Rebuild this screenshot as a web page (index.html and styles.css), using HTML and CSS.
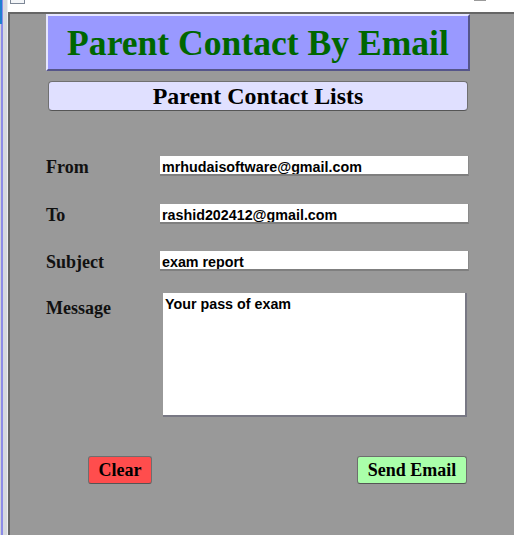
FILE: index.html
```html
<!DOCTYPE html>
<html>
<head>
<meta charset="utf-8">
<title>Parent Contact By Email</title>
<link rel="stylesheet" href="styles.css">
</head>
<body>
<div class="screen">
  <div class="side"></div>
  <div class="window">
    <div class="titlebar">
      <span class="app-icon"></span>
      <span class="controls">
        <span class="min"></span>
        <svg class="close" width="16" height="5" viewBox="0 0 16 5"><path d="M2 -3 L6 3 M14 -3 L10 3" stroke="#9a9a9a" stroke-width="1.2" fill="none"/></svg>
      </span>
    </div>
    <div class="body-row">
      <div class="panel">
        <div class="title-box">Parent Contact By Email</div>
        <div class="sub-box">Parent Contact Lists</div>
        <form class="form">
          <div class="row row-from">
            <label class="lbl" for="from">From</label>
            <input class="field" id="from" type="text" value="mrhudaisoftware@gmail.com">
          </div>
          <div class="row row-to">
            <label class="lbl" for="to">To</label>
            <input class="field" id="to" type="text" value="rashid202412@gmail.com">
          </div>
          <div class="row row-subject">
            <label class="lbl" for="subject">Subject</label>
            <input class="field" id="subject" type="text" value="exam report">
          </div>
          <div class="row row-message">
            <label class="lbl lbl-msg" for="message">Message</label>
            <textarea class="area" id="message">Your pass of exam</textarea>
          </div>
          <div class="actions">
            <button type="button" class="btn btn-clear">Clear</button>
            <button type="button" class="btn btn-send">Send Email</button>
          </div>
        </form>
      </div>
      <div class="right-edge"></div>
    </div>
  </div>
</div>
</body>
</html>
```

FILE: styles.css
```css
html, body {
  margin: 0;
  padding: 0;
  background: #ffffff;
}

.screen {
  display: flex;
  width: 514px;
  height: 535px;
  overflow: hidden;
}

.side {
  width: 8px;
  flex: none;
  background:
    linear-gradient(to bottom, #1f7fd0 0 24px, transparent 24px) 0 0 / 2px 100% no-repeat,
    linear-gradient(to right, #d0d3d8 0 1px, #8c8ce8 1px 3px, #d6d9de 3px 7px, #eceef1 7px 8px);
}

.window {
  flex: 1;
  display: flex;
  flex-direction: column;
}

.titlebar {
  height: 12px;
  flex: none;
  background: #ffffff;
  display: flex;
  align-items: flex-start;
  justify-content: space-between;
}

.app-icon {
  display: block;
  width: 13px;
  height: 3px;
  margin-left: 2px;
  border: 1px solid #7d8796;
  border-top: none;
  background: #f4f6f8;
}

.controls {
  display: flex;
  align-items: flex-start;
  margin-right: 10px;
}

.min {
  display: block;
  width: 12px;
  height: 1px;
  margin-top: 0;
  background: #9a9a9a;
  margin-right: 34px;
}

.close {
  display: block;
}

.body-row {
  flex: 1;
  display: flex;
}

.panel {
  width: 498px;
  flex: none;
  background: #999999;
  border: 2px solid #666666;
  border-bottom: none;
  padding-left: 36px;
  box-sizing: content-box;
}

.right-edge {
  flex: 1;
  background: #cfd2d9;
}

.title-box {
  box-sizing: border-box;
  width: 424px;
  height: 57px;
  background: #9999ff;
  border-style: solid;
  border-width: 2px;
  border-color: #e6e6ff #55558a #55558a #e6e6ff;
  color: #006600;
  font-family: "Liberation Serif", "Times New Roman", serif;
  font-weight: bold;
  font-size: 35.6px;
  display: flex;
  align-items: center;
  justify-content: center;
}

.sub-box {
  box-sizing: border-box;
  width: 420px;
  height: 30px;
  margin: 10px 0 0 2px;
  background: #e0e0ff;
  border: 1px solid #707070;
  border-bottom-color: #555555;
  border-radius: 4px;
  color: #000000;
  font-family: "Liberation Serif", "Times New Roman", serif;
  font-weight: bold;
  font-size: 23.9px;
  display: flex;
  align-items: center;
  justify-content: center;
}

.form {
  margin: 45px 0 0 0;
}

.row {
  display: flex;
  align-items: flex-start;
}

.row-to { margin-top: 28px; }
.row-subject { margin-top: 27px; }
.row-message { margin-top: 22px; }

.lbl {
  width: 114px;
  flex: none;
  margin-top: 1px;
  margin-bottom: -1px;
  font-family: "Liberation Serif", "Times New Roman", serif;
  font-weight: bold;
  font-size: 18px;
  line-height: 20px;
  color: #111111;
}

.lbl-msg {
  margin-top: 5px;
}

.field {
  box-sizing: border-box;
  width: 309px;
  height: 20px;
  margin: 0;
  padding: 4px 2px 0 2px;
  background: #ffffff;
  border: none;
  border-bottom: 2px solid #7f7f7f;
  border-right: 1px solid #8a8a8a;
  border-radius: 0;
  outline: none;
  font-family: "Liberation Sans", Arial, sans-serif;
  font-weight: bold;
  font-size: 14.3px;
  color: #000000;
}

.area {
  box-sizing: border-box;
  width: 304px;
  height: 124px;
  margin: 0 0 0 3px;
  padding: 3px 2px 0 2px;
  background: #ffffff;
  border: none;
  border-bottom: 2px solid #787884;
  border-right: 2px solid #787884;
  border-radius: 0;
  outline: none;
  resize: none;
  overflow: hidden;
  font-family: "Liberation Sans", Arial, sans-serif;
  font-weight: bold;
  font-size: 14.3px;
  line-height: 16px;
  color: #000000;
  display: block;
}

.actions {
  display: flex;
  justify-content: space-between;
  width: 379px;
  margin: 39px 0 0 42px;
}

.btn {
  box-sizing: border-box;
  height: 28px;
  margin: 0;
  padding: 0;
  border: 1px solid #6e6e6e;
  border-bottom-color: #555555;
  border-radius: 3px;
  font-family: "Liberation Serif", "Times New Roman", serif;
  font-weight: bold;
  font-size: 18px;
  color: #000000;
  cursor: pointer;
}

.btn-clear {
  width: 64px;
  background: #ff4d4d;
}

.btn-send {
  width: 110px;
  background: #aaffaa;
}
```
